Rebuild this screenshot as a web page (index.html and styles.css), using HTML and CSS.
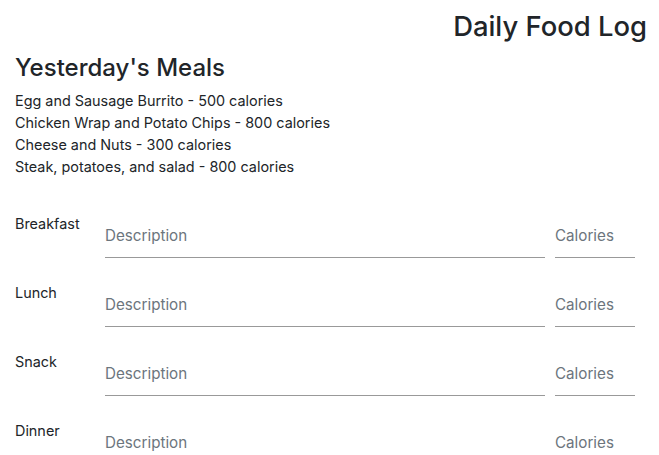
FILE: index.html
```html
<!DOCTYPE html>
<html>
<head>
<meta charset="utf-8">
<link rel="stylesheet" href="styles.css">
</head>
<body>
<div class="page">
  <header class="top">
    <h1 class="title">Daily Food Log</h1>
  </header>
  <section class="yesterday">
    <h2 class="subtitle">Yesterday's Meals</h2>
    <ul class="meals">
      <li>Egg and Sausage Burrito - 500 calories</li>
      <li>Chicken Wrap and Potato Chips - 800 calories</li>
      <li>Cheese and Nuts - 300 calories</li>
      <li>Steak, potatoes, and salad - 800 calories</li>
    </ul>
  </section>
  <form class="log">
    <div class="row">
      <label class="label">Breakfast</label>
      <input class="field desc" type="text" placeholder="Description">
      <input class="field cal" type="text" placeholder="Calories">
    </div>
    <div class="row">
      <label class="label">Lunch</label>
      <input class="field desc" type="text" placeholder="Description">
      <input class="field cal" type="text" placeholder="Calories">
    </div>
    <div class="row">
      <label class="label">Snack</label>
      <input class="field desc" type="text" placeholder="Description">
      <input class="field cal" type="text" placeholder="Calories">
    </div>
    <div class="row">
      <label class="label">Dinner</label>
      <input class="field desc" type="text" placeholder="Description">
      <input class="field cal" type="text" placeholder="Calories">
    </div>
  </form>
</div>
</body>
</html>
```
FILE: styles.css
```css
* { box-sizing: border-box; }
html, body { margin: 0; padding: 0; background: #fff; }
body {
  font-family: Inter, "Liberation Sans", sans-serif;
  color: #212529;
  font-size: 14.4px;
  line-height: 22px;
}
.page { padding: 0 12px 0 15px; }
.top { display: flex; justify-content: flex-end; }
.title {
  margin: 8px 0 0;
  font-size: 27.4px;
  font-weight: 500;
  line-height: 36px;
}
.subtitle {
  margin: 9px 0 7px;
  font-size: 24px;
  font-weight: 500;
  line-height: 30px;
}
.meals { list-style: none; margin: 0; padding: 0; }
.log { margin-top: 36px; padding-right: 12px; display: flex; flex-direction: column; gap: 25px; }
.row { display: flex; gap: 10px; align-items: flex-start; }
.label { width: 80px; line-height: 20px; font-size: 14.4px; }
.field {
  height: 44px;
  border: 0;
  border-bottom: 1px solid #999;
  padding: 0;
  font: inherit;
  font-size: 15.2px;
  color: #212529;
  background: transparent;
  outline: none;
}
.field::placeholder { color: #6c757d; opacity: 1; }
.desc { flex: 1; }
.cal { width: 80px; }
```
